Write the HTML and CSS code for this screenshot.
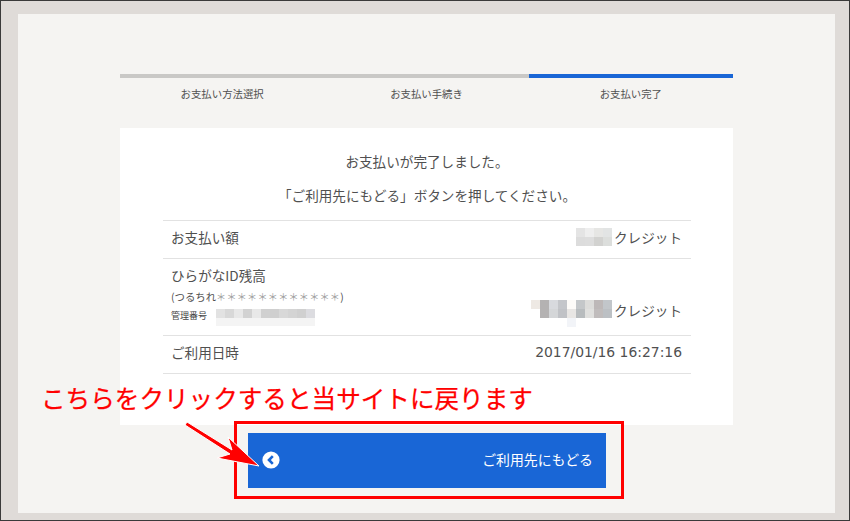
FILE: index.html
```html
<!DOCTYPE html>
<html lang="ja">
<head>
<meta charset="utf-8">
<title>お支払い完了</title>
<link rel="stylesheet" href="styles.css">
</head>
<body>
<div class="frame">
  <main class="panel">
    <ol class="steps">
      <li class="step">お支払い方法選択</li>
      <li class="step">お支払い手続き</li>
      <li class="step step-active">お支払い完了</li>
    </ol>
    <section class="card">
      <p class="msg msg-first">お支払いが完了しました。</p>
      <p class="msg msg-second">「ご利用先にもどる」ボタンを押してください。</p>
      <div class="rows">
        <div class="row row-amount">
          <span>お支払い額</span>
          <span class="val">
            <svg class="mosaic" width="36" height="18" viewBox="0 0 4 2" shape-rendering="crispEdges"><rect width="1" height="1" x="0" y="0" fill="#e4e4e4"/><rect width="1" height="1" x="1" y="0" fill="#eeeeee"/><rect width="1" height="1" x="2" y="0" fill="#e6e6e4"/><rect width="1" height="1" x="3" y="0" fill="#e2e4e4"/><rect width="1" height="1" x="0" y="1" fill="#dcdcdc"/><rect width="1" height="1" x="1" y="1" fill="#dddddd"/><rect width="1" height="1" x="2" y="1" fill="#d2d2d0"/><rect width="1" height="1" x="3" y="1" fill="#dcdedc"/></svg>クレジット
          </span>
        </div>
        <div class="row row-balance">
          <div class="who">
            <div>ひらがなID残高</div>
            <div class="small">(つるちれ<span class="stars">＊＊＊＊＊＊＊＊＊＊＊＊</span>)</div>
            <div class="mgmt">管理番号
              <svg class="mosaic" width="99" height="17" viewBox="0 0 11 2" preserveAspectRatio="none" shape-rendering="crispEdges"><rect width="1" height="1" x="0" y="0" fill="#e2e2e2"/><rect width="1" height="1" x="1" y="0" fill="#d8d8d8"/><rect width="1" height="1" x="2" y="0" fill="#e8e8e8"/><rect width="1" height="1" x="3" y="0" fill="#d2d2d2"/><rect width="1" height="1" x="4" y="0" fill="#e8e8e8"/><rect width="1" height="1" x="5" y="0" fill="#d0d0d0"/><rect width="1" height="1" x="6" y="0" fill="#cfcfcf"/><rect width="1" height="1" x="7" y="0" fill="#d8d8d8"/><rect width="1" height="1" x="8" y="0" fill="#d4d4d4"/><rect width="1" height="1" x="9" y="0" fill="#d0d0d0"/><rect width="1" height="1" x="10" y="0" fill="#dcdce0"/><rect width="11" height="1" x="0" y="1" fill="#f4f4f4"/></svg>
            </div>
          </div>
          <span class="val">
            <svg class="mosaic mosaic-lg" width="81" height="27" viewBox="0 0 9 3" shape-rendering="crispEdges"><rect width="1" height="1" x="0" y="0" fill="#eee9e4"/><rect width="1" height="1" x="1" y="0" fill="#b4b2b2"/><rect width="1" height="1" x="2" y="0" fill="#d8dade"/><rect width="1" height="1" x="3" y="0" fill="#c4c6ca"/><rect width="1" height="1" x="4" y="0" fill="#fdfbf8"/><rect width="1" height="1" x="5" y="0" fill="#c4c7c9"/><rect width="1" height="1" x="6" y="0" fill="#dcdcda"/><rect width="1" height="1" x="7" y="0" fill="#bdb8b8"/><rect width="1" height="1" x="8" y="0" fill="#c2c6ca"/><rect width="1" height="1" x="1" y="1" fill="#b4b2b2"/><rect width="1" height="1" x="2" y="1" fill="#d4d6d8"/><rect width="1" height="1" x="3" y="1" fill="#c0c2c6"/><rect width="1" height="1" x="4" y="1" fill="#e8e6e4"/><rect width="1" height="1" x="5" y="1" fill="#b8bcbe"/><rect width="1" height="1" x="6" y="1" fill="#e0e0de"/><rect width="1" height="1" x="7" y="1" fill="#c0bcbc"/><rect width="1" height="1" x="8" y="1" fill="#bcc0c4"/><rect width="1" height="1" x="4" y="2" fill="#f2f4f8"/></svg>クレジット
          </span>
        </div>
        <div class="row row-date">
          <span>ご利用日時</span>
          <span class="val date">2017/01/16 16:27:16</span>
        </div>
      </div>
    </section>
    <a class="back" href="#">
      <svg class="back-icon" width="18" height="18" viewBox="0 0 18 18"><circle cx="9" cy="9" r="8.6" fill="#fff"/><path d="M10.8 5.2 7 9l3.8 3.8" fill="none" stroke="#1966d6" stroke-width="2.6"/></svg>
      <span class="back-label">ご利用先にもどる</span>
    </a>
  </main>
</div>
<div class="note">こちらをクリックすると当サイトに戻ります</div>
<div class="redbox"></div>
<svg class="arrow" width="100" height="70" viewBox="0 0 100 70">
  <path d="M6 5 L51 33 L47 20 L78 49 L36 41 L49 37 L4 8 Z" fill="#ff0000" stroke="#ffffff" stroke-width="1"/>
</svg>
</body>
</html>
```

FILE: styles.css
```css
* { box-sizing: border-box; }
html, body { margin: 0; padding: 0; }
body {
  width: 850px;
  height: 521px;
  position: relative;
  overflow: hidden;
  font-family: "Noto Sans CJK JP", "Noto Sans", sans-serif;
  color: #505050;
}
.frame {
  width: 850px;
  height: 521px;
  border: 1px solid #3a3a3a;
  background: #dfdbd8;
  padding: 13px 14px 7px 17px;
}
.panel {
  height: 100%;
  background: #f5f4f2;
  padding: 60px 0 0 102px;
}
.steps {
  list-style: none;
  margin: 0;
  padding: 0;
  width: 613px;
  display: grid;
  grid-template-columns: 1fr 1fr 1fr;
}
.step {
  height: 54px;
  border-top: 4px solid #c9c8c6;
  padding-top: 8px;
  font-size: 10.4px;
  line-height: 16px;
  text-align: center;
}
.step-active { border-top-color: #1966d6; }
.card {
  width: 613px;
  height: 297px;
  background: #fff;
  padding: 0 42px 0 43px;
  font-size: 13.6px;
}
.msg {
  margin: 0;
  text-align: center;
  line-height: 20px;
}
.msg-first { padding-top: 23px; }
.msg-second { padding-top: 14px; }
.rows {
  margin-top: 15px;
  border-top: 1px solid #e2e2e2;
}
.row {
  display: flex;
  justify-content: space-between;
  padding: 0 9px 0 8px;
  border-bottom: 1px solid #e2e2e2;
}
.row-amount { height: 38px; align-items: center; padding-bottom: 5px; }
.row-date { height: 38px; align-items: center; padding-bottom: 5px; }
.row-balance { height: 77px; padding-top: 6px; }
.val { display: inline-flex; align-items: center; height: 20px; }
.row-balance .val { align-self: flex-start; margin-top: 35px; }
.date { font-family: "DejaVu Sans", sans-serif; font-size: 13.9px; }
.mosaic { display: block; flex: none; }
.row-amount .mosaic { margin-right: 2px; }
.mosaic-lg { margin-top: 7px; margin-right: 2px; }
.who { line-height: 20px; }
.small { font-size: 10.4px; line-height: 14px; margin-top: 5px; }
.stars { color: #a0a0a0; font-size: 10.1px; letter-spacing: 0.25px; }
.mgmt {
  display: flex;
  align-items: flex-start;
  gap: 9px;
  font-size: 9px;
  line-height: 14px;
  margin-top: 5px;
  color: #444;
}
.back {
  display: flex;
  justify-content: space-between;
  align-items: center;
  width: 358px;
  height: 55px;
  margin: 8px 0 0 128px;
  padding: 0 13px 4px 14px;
  background: #1966d6;
  color: #fff;
  font-size: 13.9px;
  text-decoration: none;
}
.back-icon { display: block; margin-top: 2px; }
.note {
  position: absolute;
  left: 41px;
  top: 382px;
  color: #ff0000;
  font-size: 24.6px;
  line-height: 30px;
  -webkit-text-stroke: 0.25px #ff0000;
  white-space: nowrap;
}
.redbox {
  position: absolute;
  left: 234px;
  top: 421px;
  width: 390px;
  height: 78px;
  border: 3px solid #ff0000;
}
.arrow {
  position: absolute;
  left: 181px;
  top: 417px;
}
```
